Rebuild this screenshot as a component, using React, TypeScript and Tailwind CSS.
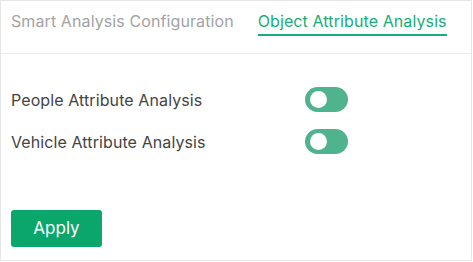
import React, { useState } from "react";

function Toggle({ on, onClick }: { on: boolean; onClick: () => void }) {
  return (
    <button
      onClick={onClick}
      className="relative w-[43px] h-[25px] rounded-full bg-[#4fb38e] shrink-0"
    >
      <span className="absolute left-[5px] top-[4px] w-[17px] h-[17px] rounded-full bg-white" />
    </button>
  );
}

export default function App() {
  const [a, setA] = useState(false);
  const [b, setB] = useState(false);
  return (
    <div
      className="w-[472px] h-[261px] bg-white border border-[#e6e6e6] flex flex-col"
      style={{ fontFamily: "Inter, 'Noto Sans', sans-serif" }}
    >
      <div className="h-[53px] border-b border-[#ebebeb] flex items-start pl-[10px] gap-[24px] text-[16px] tracking-[0.1px]">
        <div className="pt-[8px] text-[#a3a3a3]">Smart Analysis Configuration</div>
        <div className="pt-[8px] text-[#17ae78] flex flex-col">
          <span>Object Attribute Analysis</span>
          <span className="mt-[1px] h-[2px] bg-[#17ae78]" />
        </div>
      </div>
      <div className="flex flex-col pl-[10px] pt-[33px] gap-[17px] text-[16px] tracking-[0.1px] text-[#444]">
        <div className="flex items-center h-[25px]">
          <span className="w-[294px]">People Attribute Analysis</span>
          <Toggle on={a} onClick={() => setA(!a)} />
        </div>
        <div className="flex items-center h-[25px]">
          <span className="w-[294px]">Vehicle Attribute Analysis</span>
          <Toggle on={b} onClick={() => setB(!b)} />
        </div>
      </div>
      <div className="pl-[10px] pt-[56px]">
        <button className="w-[91px] h-[37px] rounded-[3px] bg-[#0aa66c] text-white text-[17px]">
          Apply
        </button>
      </div>
    </div>
  );
}
